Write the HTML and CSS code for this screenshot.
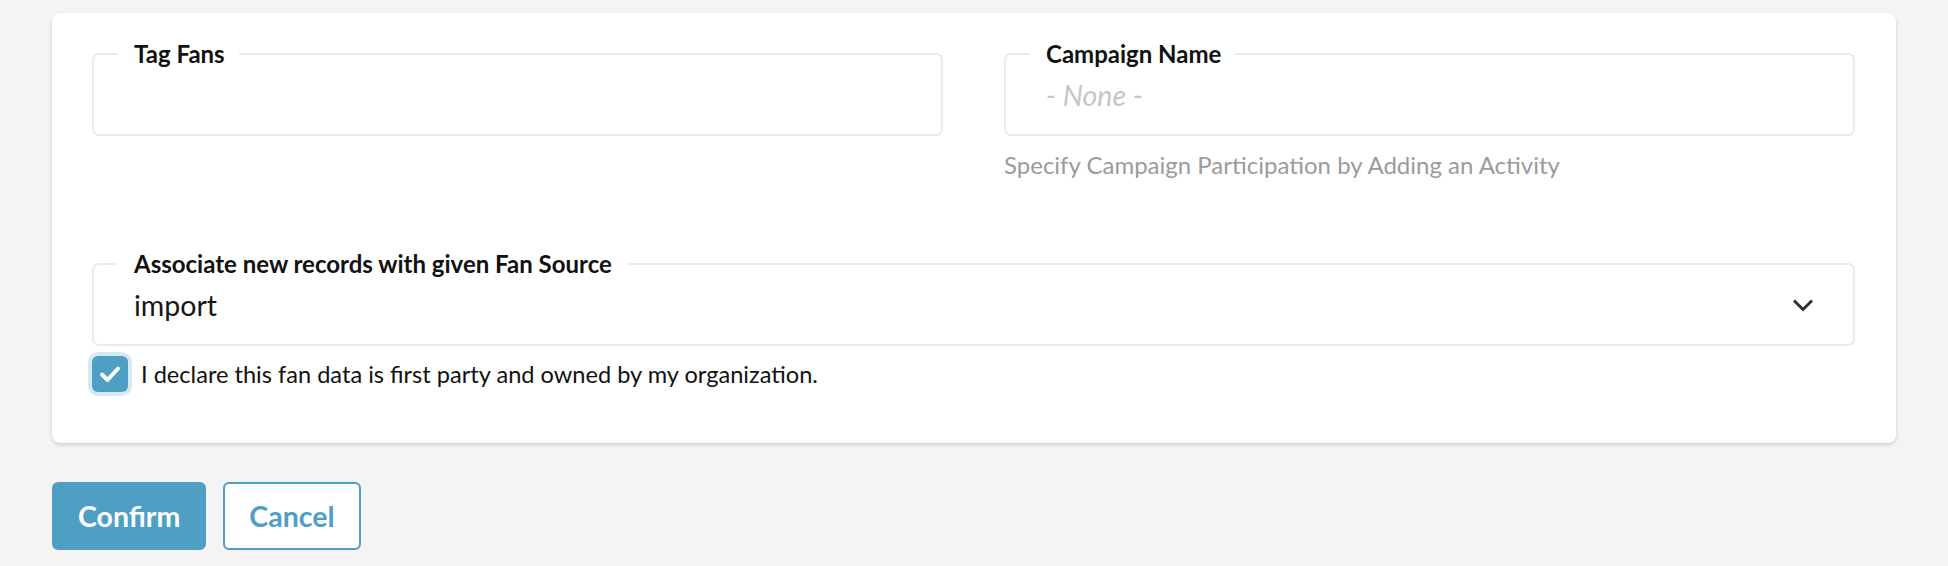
FILE: index.html
```html
<!DOCTYPE html>
<html lang="en">
<head>
<meta charset="utf-8">
<title>Import Fans</title>
<link rel="stylesheet" href="styles.css">
</head>
<body>
<div class="page">
  <div class="card">
    <div class="grid">
      <div class="col">
        <fieldset class="field">
          <legend class="field-label">Tag Fans</legend>
          <div class="field-value"></div>
        </fieldset>
      </div>
      <div class="col">
        <fieldset class="field">
          <legend class="field-label">Campaign Name</legend>
          <div class="field-value placeholder">- None -</div>
        </fieldset>
        <p class="helper">Specify Campaign Participation by Adding an Activity</p>
      </div>
    </div>
    <fieldset class="field field-select">
      <legend class="field-label">Associate new records with given Fan Source</legend>
      <div class="field-value select-value">
        <span>import</span>
        <svg class="chevron" width="20" height="13" viewBox="0 0 20 13"><path d="M2 2.5 L10 10.5 L18 2.5" fill="none" stroke="#2f3033" stroke-width="3" stroke-linecap="square"/></svg>
      </div>
    </fieldset>
    <label class="check-row">
      <span class="checkbox"><svg width="22" height="18" viewBox="0 0 22 18"><path d="M3 9.5 L8.5 15 L19 3.5" fill="none" stroke="#ffffff" stroke-width="4" stroke-linecap="round" stroke-linejoin="round"/></svg></span>
      <span class="check-text">I declare this fan data is first party and owned by my organization.</span>
    </label>
  </div>
  <div class="actions">
    <button class="btn btn-primary">Confirm</button>
    <button class="btn btn-secondary">Cancel</button>
  </div>
</div>
</body>
</html>
```
FILE: styles.css
```css
html, body {
  margin: 0;
  padding: 0;
  background: #f4f4f4;
  font-family: Lato, "Liberation Sans", sans-serif;
  color: #111111;
}

.page {
  padding: 13px 52px 0 52px;
}

.card {
  background: #ffffff;
  border-radius: 8px;
  box-shadow: 0 2px 4px rgba(0, 0, 0, 0.14), 0 0 1px rgba(0, 0, 0, 0.08);
  padding: 29px 41px 51px 40px;
}

.grid {
  display: grid;
  grid-template-columns: 1fr 1fr;
  column-gap: 61px;
}

.field {
  margin: 0;
  padding: 0 24px;
  border: 2px solid #ebebeb;
  border-radius: 7px;
  min-width: 0;
}

.field-label {
  padding: 0 14px 0 16px;
  font-size: 24px;
  line-height: 24px;
  font-weight: 700;
  color: #111111;
}

.field-value {
  height: 30px;
  padding: 14px 16px 24px 16px;
  font-size: 28.5px;
  line-height: 30px;
  color: #161616;
}

.placeholder {
  font-style: italic;
  color: #c6c6c6;
}

.helper {
  margin: 17px 0 0 0;
  font-size: 24px;
  line-height: 24px;
  color: #9b9b9b;
}

.field-select {
  margin-top: 75px;
}

.select-value {
  display: flex;
  align-items: center;
  justify-content: space-between;
}

.chevron {
  display: block;
  margin-top: 0;
}

.check-row {
  display: flex;
  align-items: center;
  gap: 13px;
  margin-top: 10px;
}

.checkbox {
  width: 36px;
  height: 36px;
  border-radius: 6px;
  background: #4f9fc4;
  box-shadow: 0 0 0 4px #d6e9f3;
  display: flex;
  align-items: center;
  justify-content: center;
  flex: none;
}

.checkbox svg {
  display: block;
}

.check-text {
  font-size: 23.6px;
  line-height: 28px;
  color: #111111;
}

.actions {
  display: flex;
  gap: 17px;
  margin-top: 39px;
}

.btn {
  height: 68px;
  border-radius: 6px;
  font-family: Lato, "Liberation Sans", sans-serif;
  font-size: 28.5px;
  font-weight: 700;
  padding: 0 24px;
  cursor: pointer;
}

.btn-primary {
  background: #4f9fc4;
  border: 2px solid #4f9fc4;
  color: #ffffff;
}

.btn-secondary {
  background: #ffffff;
  border: 2px solid #4f9fc4;
  color: #4f9fc4;
  padding: 0 24px;
}
```
